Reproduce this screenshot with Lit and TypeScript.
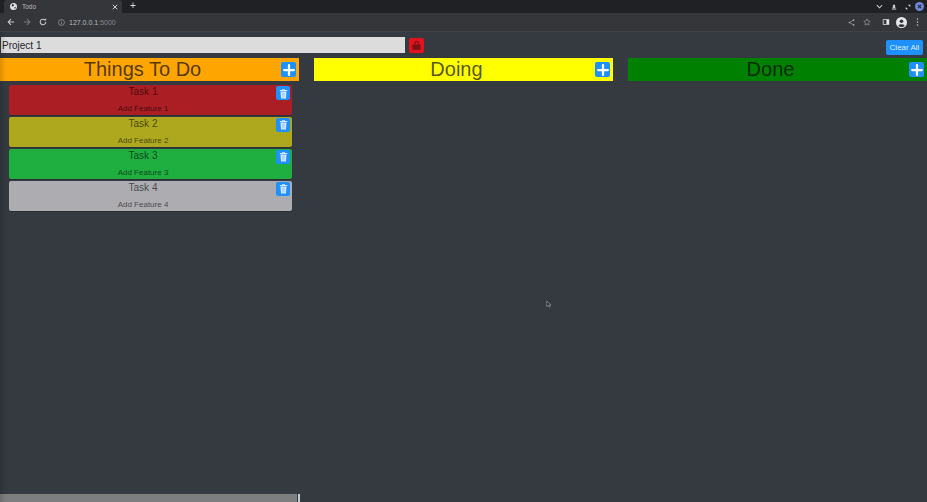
import { LitElement, html, css } from "lit";
import { customElement } from "lit/decorators.js";

const tasks = [
  { t: "Task 1", f: "Add Feature 1", c: "#ab1f24" },
  { t: "Task 2", f: "Add Feature 2", c: "#aea81f" },
  { t: "Task 3", f: "Add Feature 3", c: "#1fae40" },
  { t: "Task 4", f: "Add Feature 4", c: "#adadb1" },
];

const plus = html`<svg viewBox="0 0 16 16" width="12" height="12"><path d="M8 1.500v13M1.500 8h13" stroke="#fff" stroke-width="3" stroke-linecap="round" fill="none"/></svg>`;
const trash = html`<svg viewBox="0 0 12 14" width="9" height="11"><path fill="#dcecff" d="M1 2.200h10v1.300H1zM4.200 1h3.600v1H4.200zM2 4.200h8l-.7 9.300H2.700z"/><path stroke="#7ab9f7" stroke-width=".6" d="M4.500 5.500v6.800M6 5.500v6.800M7.500 5.500v6.800"/></svg>`;

@customElement("app-root")
export class AppRoot extends LitElement {
  static styles = css`
    :host { display: flex; flex-direction: column; width: 927px; height: 502px; overflow: hidden; background: #343a40; font-family: "Liberation Sans", Arial, sans-serif; color: #212529; }
    .tabs { height: 13px; background: #202124; display: flex; align-items: stretch; padding-left: 4px; flex: none; }
    .tab { width: 118px; background: #35363a; display: flex; align-items: center; padding: 0 4px 0 6px; gap: 5px; color: #b5b7ba; font-size: 6.500px; box-sizing: border-box; border-radius: 3px 3px 0 0; }
    .tab span { flex: 1; }
    .newtab { margin-left: 8px; color: #dcdde0; font-size: 10px; line-height: 12px; }
    .winctl { margin-left: auto; display: flex; align-items: center; gap: 8px; padding-right: 3px; }
    .winctl .me { margin-left: -4px; }
    .toolbar { height: 18px; background: #35363a; display: flex; align-items: center; flex: none; padding: 0 8px 0 7px; gap: 8px; border-bottom: 1px solid #3f4145; }
    .url { color: #85888c; font-size: 7px; margin-left: 3px; display: flex; align-items: center; gap: 4px; }
    .url b { font-weight: 400; color: #b8babd; }
    .spacer { flex: 1; }
    .toolbar .panel { margin-left: 3px; }
    .toolbar .avatar { margin: 0 1px 0 -2px; }
    .page { flex: 1; display: flex; flex-direction: column; min-height: 0; position: relative; }
    .page::after { content: ""; position: absolute; left: 0; top: 0; bottom: 0; width: 6px; background: linear-gradient(90deg, rgba(0,0,0,.14), rgba(0,0,0,0)); pointer-events: none; }
    .top { display: flex; align-items: flex-start; padding: 5px 4px 0 1px; height: 26px; box-sizing: border-box; flex: none; }
    .project { width: 404px; height: 16px; box-sizing: border-box; border: 0; padding: 0 1px; margin: 0; background: #dcdcdc; color: #212529; font: 10px "Liberation Sans", Arial, sans-serif; }
    .lock { width: 15px; height: 15px; margin: 1px 0 0 4px; background: #e2131c; border-radius: 2px; display: flex; align-items: center; justify-content: center; }
    .clear { margin: 3px 0 0 auto; width: 37px; height: 15px; padding: 0; border: 0; border-radius: 2px; background: #1e90ff; color: #dcecff; font: 8px "Liberation Sans", Arial, sans-serif; }
    .cols { display: grid; grid-template-columns: 299px 299px 299px; column-gap: 15px; align-items: start; flex: 1; min-height: 0; }
    .head { height: 23px; display: flex; align-items: center; justify-content: center; font-size: 20px; position: relative; padding-right: 14px; box-sizing: border-box; color: rgba(0,0,0,.68); }
    .head .add { position: absolute; top: 4px; right: 3px; width: 15px; height: 15px; }
    .orange { background: #ffa500; } .yellow { background: #ffff00; } .green { background: #008000; }
    .btn { background: #1e90ff; border-radius: 2px; display: flex; align-items: center; justify-content: center; }
    .cards { display: flex; flex-direction: column; gap: 2.330px; padding: 4px 7px 0 9px; }
    .card { position: relative; height: 29.670px; border-radius: 2px; text-align: center; color: rgba(0,0,0,.62); box-shadow: 0 1px 0 rgba(0,0,0,.18); padding: 1px 15px 0 0; box-sizing: border-box; }
    .card h4 { margin: 0; font-weight: 400; font-size: 10px; line-height: 12px; }
    .card p { margin: 0; padding-top: 6px; font-size: 8px; line-height: 10px; }
    .card .del { position: absolute; top: 1px; right: 2px; width: 14px; height: 14px; }
    .scroll { position: absolute; left: 0; bottom: 0; width: 297px; height: 8px; background: #7c7e80; }
    .scroll::after { content: ""; position: absolute; left: 298px; top: 0; width: 2px; height: 8px; background: #c9cacb; }
    .cursor { position: absolute; left: 546px; top: 268px; }
  `;

  render() {
    const col = (name: string, cls: string, cards: typeof tasks) => html`
      <section>
        <div class="head ${cls}">${name}<div class="btn add">${plus}</div></div>
        ${cards.length ? html`<div class="cards">${cards.map(c => html`
          <div class="card" style="background:${c.c}">
            <h4>${c.t}</h4><p>${c.f}</p>
            <div class="btn del">${trash}</div>
          </div>`)}</div>` : ""}
      </section>`;
    return html`
      <div class="tabs">
        <div class="tab">
          <svg viewBox="0 0 10 10" width="7" height="7"><circle cx="5" cy="5" r="5" fill="#dfe1e4"/><path d="M3 1.500l3 1-1 2-2.500.5zM6 6l2.500-.5L7 9z" fill="#35363a"/></svg>
          <span>Todo</span>
          <svg viewBox="0 0 8 8" width="6" height="6"><path d="M1 1l6 6M7 1L1 7" stroke="#d5d7da" stroke-width="1.300"/></svg>
        </div>
        <div class="newtab">+</div>
        <div class="winctl">
          <svg viewBox="0 0 8 8" width="7" height="7"><path d="M1 2.500l3 3 3-3" stroke="#c8cacc" stroke-width="1.200" fill="none"/></svg>
          <svg viewBox="0 0 8 8" width="6" height="6"><path d="M2.500 1h3v3l1 2h-5l1-2z" fill="#c8cacc"/><path d="M1 7h6" stroke="#c8cacc"/></svg>
          <svg viewBox="0 0 8 8" width="6" height="6"><path d="M4 1h3v3zM4 7H1V4z" fill="#e6e7e9"/></svg>
          <svg class="me" viewBox="0 0 10 10" width="9" height="9"><circle cx="5" cy="5" r="5" fill="#6f86d6"/><path d="M3.300 3.300l3.400 3.400M6.700 3.300L3.300 6.700" stroke="#20243a" stroke-width="1.200"/></svg>
        </div>
      </div>
      <div class="toolbar">
        <svg viewBox="0 0 10 10" width="8" height="8"><path d="M9 5H2M5 1.500L1.500 5 5 8.500" stroke="#c8cacc" stroke-width="1.300" fill="none"/></svg>
        <svg viewBox="0 0 10 10" width="8" height="8"><path d="M1 5h7M5 1.500L8.500 5 5 8.500" stroke="#76787b" stroke-width="1.300" fill="none"/></svg>
        <svg viewBox="0 0 10 10" width="8" height="8"><path d="M8.500 5A3.500 3.500 0 1 1 7.400 2.400" stroke="#c8cacc" stroke-width="1.300" fill="none"/><path d="M6 3.200h3v-3z" fill="#c8cacc"/></svg>
        <div class="url">
          <svg viewBox="0 0 10 10" width="7" height="7"><circle cx="5" cy="5" r="4.200" stroke="#9da0a4" fill="none"/><path d="M5 4.500v3M5 2.500v1" stroke="#9da0a4"/></svg>
          <span><b>127.0.0.1</b>:5000</span>
        </div>
        <div class="spacer"></div>
        <svg viewBox="0 0 10 10" width="7" height="7"><path d="M8 1.500L2 5l6 3.500" stroke="#9da0a4" fill="none"/><circle cx="8" cy="1.500" r="1.200" fill="#9da0a4"/><circle cx="2" cy="5" r="1.200" fill="#9da0a4"/><circle cx="8" cy="8.500" r="1.200" fill="#9da0a4"/></svg>
        <svg viewBox="0 0 10 10" width="8" height="8"><path d="M5 1l1.200 2.700 2.800.3-2.100 1.900.6 2.900L5 7.400 2.500 8.800l.6-2.900L1 4l2.800-.3z" stroke="#9da0a4" stroke-width=".8" fill="none"/></svg>
        <svg class="panel" viewBox="0 0 10 10" width="8" height="8"><path fill-rule="evenodd" d="M1 1.500h8v7H1zM2 2.500v5h3.500v-5z" fill="#e6e7e9"/></svg>
        <svg class="avatar" viewBox="0 0 12 12" width="11" height="11"><circle cx="6" cy="6" r="6" fill="#e6e7e9"/><circle cx="6" cy="4.600" r="2" fill="#35363a"/><path d="M2.400 9.500a4.200 3 0 0 1 7.200 0 5 5 0 0 1-7.200 0z" fill="#35363a"/></svg>
        <svg viewBox="0 0 4 12" width="3" height="10"><circle cx="2" cy="2" r="1" fill="#c8cacc"/><circle cx="2" cy="6" r="1" fill="#c8cacc"/><circle cx="2" cy="10" r="1" fill="#c8cacc"/></svg>
      </div>
      <div class="page">
        <div class="top">
          <input class="project" .value=${"Project 1"} />
          <div class="lock"><svg viewBox="0 0 12 12" width="11" height="11"><path d="M4 5V3.500a2 2 0 0 1 4 0V5" stroke="#7a1218" stroke-width="1.200" fill="none"/><rect x="1.500" y="5" width="9" height="5.500" rx="1" fill="#7a1218"/></svg></div>
          <button class="clear">Clear All</button>
        </div>
        <div class="cols">
          ${col("Things To Do", "orange", tasks)}
          ${col("Doing", "yellow", [])}
          ${col("Done", "green", [])}
        </div>
        <div class="scroll"></div>
        <svg class="cursor" viewBox="0 0 8 10" width="6" height="9"><path d="M1 .5v7l2-1.500 1.200 2.500 1.300-.6L4.300 5.500h2.400z" fill="#20242a" stroke="#d8d8d8" stroke-width=".6"/></svg>
      </div>
    `;
  }
}
